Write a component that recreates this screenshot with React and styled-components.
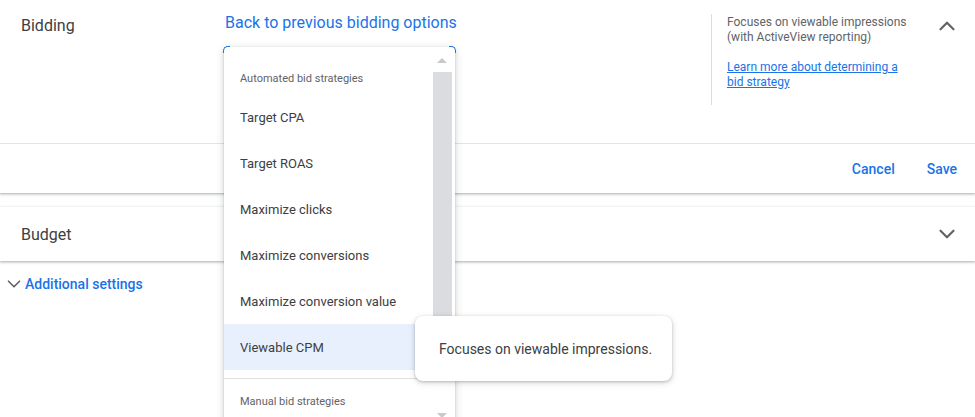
import styled, { createGlobalStyle } from "styled-components";

const GlobalStyle = createGlobalStyle`
  body {
    margin: 0;
    background: #fff;
    font-family: Roboto, "Liberation Sans", Arial, sans-serif;
    color: #3c4043;
  }
`;

const Page = styled.div`
  position: relative;
  width: 975px;
  height: 417px;
  overflow: hidden;
`;

const Card = styled.section`
  background: #fff;
  box-shadow: 0 1px 2px rgba(60, 64, 67, 0.3), 0 1px 3px 1px rgba(60, 64, 67, 0.12);
  margin-top: ${({ $top }) => $top || 0}px;
`;

const CardBody = styled.div`
  display: flex;
  height: 144px;
  box-sizing: border-box;
  border-bottom: 1px solid #e3e3e3;
`;

const SectionTitle = styled.div`
  width: 204px;
  flex: none;
  padding: 15px 0 0 21px;
  font-size: 16px;
  line-height: 22px;
  color: #3c4043;
`;

const MainCol = styled.div`
  width: 486px;
  flex: none;
  padding-top: 13px;
`;

const BackLink = styled.a`
  font-size: 16px;
  line-height: 20px;
  color: #1a73e8;
  cursor: pointer;
`;

const HelpPanel = styled.div`
  width: 199px;
  height: 90px;
  flex: none;
  margin-top: 14px;
  padding: 1px 0 0 15px;
  border-left: 1px solid #dadce0;
  font-size: 12px;
  line-height: 15px;
  color: #5f6368;
`;

const HelpText = styled.p`
  margin: 0 0 15px;
`;

const HelpLink = styled.a`
  color: #1a73e8;
  text-decoration: underline;
`;

const IconCol = styled.div`
  flex: 1;
  display: flex;
  justify-content: flex-end;
  align-items: ${({ $center }) => ($center ? "center" : "flex-start")};
  padding: ${({ $center }) => ($center ? "0 15px 0 0" : "13px 15px 0 0")};
  color: #5f6368;
`;

const Footer = styled.div`
  height: 49px;
  display: flex;
  justify-content: flex-end;
  align-items: center;
  gap: 32px;
  padding-right: 18px;
`;

const TextButton = styled.button`
  border: none;
  background: none;
  padding: 0;
  font-family: inherit;
  font-size: 14px;
  font-weight: 500;
  color: #1a73e8;
  cursor: pointer;
`;

const CardHeader = styled.div`
  display: flex;
  height: 54px;
`;

const HeaderTitle = styled.div`
  display: flex;
  align-items: center;
  padding-left: 21px;
  font-size: 16px;
  color: #3c4043;
`;

const MoreRow = styled.div`
  display: flex;
  align-items: center;
  height: 20px;
  margin-top: 13px;
  padding-left: 3px;
  color: #5f6368;
`;

const MoreLink = styled.a`
  font-size: 14px;
  font-weight: 500;
  color: #1a73e8;
`;

/* dropdown overlay */
const Menu = styled.div`
  position: absolute;
  left: 224px;
  top: 47px;
  width: 231px;
  height: 380px;
  background: #fff;
  border-radius: 4px 4px 0 0;
  box-shadow: 0 2px 6px 2px rgba(60, 64, 67, 0.15), 0 1px 2px rgba(60, 64, 67, 0.3);
  padding-top: 15px;
  box-sizing: border-box;

  &::before,
  &::after {
    content: "";
    position: absolute;
    top: -1px;
    width: 6px;
    height: 6px;
    border-top: 1.5px solid #1a73e8;
  }
  &::before {
    left: -1px;
    border-left: 1.5px solid #1a73e8;
    border-top-left-radius: 5px;
  }
  &::after {
    right: -1px;
    border-right: 1.5px solid #1a73e8;
    border-top-right-radius: 5px;
  }
`;

const GroupHeader = styled.div`
  height: 32px;
  display: flex;
  align-items: center;
  padding-left: 16px;
  padding-top: ${({ $pad }) => $pad || 0}px;
  font-size: 11px;
  color: #5f6368;
`;

const Option = styled.div`
  height: 46px;
  display: flex;
  align-items: center;
  padding-left: 16px;
  font-size: 13px;
  color: #3c4043;
  background: ${({ $active }) => ($active ? "#e8f0fe" : "transparent")};
`;

const MenuDivider = styled.div`
  height: 1px;
  margin-top: 8px;
  background: #e0e0e0;
`;

const Scrollbar = styled.div`
  position: absolute;
  top: 0;
  right: 3px;
  width: 19px;
  height: 100%;
`;

const ScrollArrow = styled.div`
  position: absolute;
  left: 4px;
  top: ${({ $top }) => $top}px;
  width: 0;
  height: 0;
  border-left: 5px solid transparent;
  border-right: 5px solid transparent;
  ${({ $down }) =>
    $down ? "border-top: 5px solid #c8c9cb;" : "border-bottom: 5px solid #c8c9cb;"}
`;

const Thumb = styled.div`
  position: absolute;
  left: 0;
  top: 25px;
  width: 19px;
  height: 300px;
  background: #dadce0;
`;

const Tooltip = styled.div`
  position: absolute;
  left: 415px;
  top: 316px;
  width: 257px;
  height: 65px;
  box-sizing: border-box;
  display: flex;
  align-items: center;
  padding-left: 24px;
  background: #fff;
  border-radius: 8px;
  box-shadow: 0 1px 3px rgba(60, 64, 67, 0.3), 0 2px 6px 1px rgba(60, 64, 67, 0.12);
  font-size: 14px;
  color: #3c4043;
`;

const Chevron = ({ up, size = 26, weight = 2 }) => (
  <svg
    width={size}
    height={size}
    viewBox="0 0 24 24"
    fill="none"
    stroke="currentColor"
    strokeWidth={weight}
    strokeLinecap="round"
    strokeLinejoin="round"
  >
    {up ? <polyline points="6 15 12 9 18 15" /> : <polyline points="6 9 12 15 18 9" />}
  </svg>
);

const automated = [
  "Target CPA",
  "Target ROAS",
  "Maximize clicks",
  "Maximize conversions",
  "Maximize conversion value",
  "Viewable CPM",
];

export default function App() {
  return (
    <Page>
      <GlobalStyle />
      <Card>
        <CardBody>
          <SectionTitle>Bidding</SectionTitle>
          <MainCol>
            <BackLink>Back to previous bidding options</BackLink>
          </MainCol>
          <HelpPanel>
            <HelpText>
              Focuses on viewable impressions
              <br />
              (with ActiveView reporting)
            </HelpText>
            <HelpLink>
              Learn more about determining a
              <br />
              bid strategy
            </HelpLink>
          </HelpPanel>
          <IconCol>
            <Chevron up />
          </IconCol>
        </CardBody>
        <Footer>
          <TextButton>Cancel</TextButton>
          <TextButton>Save</TextButton>
        </Footer>
      </Card>

      <Card $top={14}>
        <CardHeader>
          <HeaderTitle>Budget</HeaderTitle>
          <IconCol $center>
            <Chevron />
          </IconCol>
        </CardHeader>
      </Card>

      <MoreRow>
        <Chevron size={22} weight={1.8} />
        <MoreLink>Additional settings</MoreLink>
      </MoreRow>

      <Menu>
        <GroupHeader>Automated bid strategies</GroupHeader>
        {automated.map((label) => (
          <Option key={label} $active={label === "Viewable CPM"}>
            {label}
          </Option>
        ))}
        <MenuDivider />
        <GroupHeader $pad={6}>Manual bid strategies</GroupHeader>
        <Scrollbar>
          <ScrollArrow $top={11} />
          <Thumb />
          <ScrollArrow $top={366} $down />
        </Scrollbar>
      </Menu>

      <Tooltip>Focuses on viewable impressions.</Tooltip>
    </Page>
  );
}
